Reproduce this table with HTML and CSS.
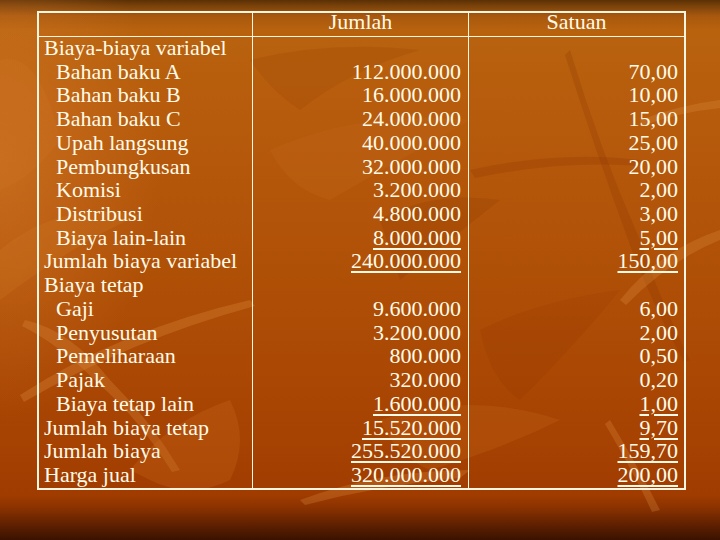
FILE: index.html
```html
<!DOCTYPE html>
<html>
<head>
<meta charset="utf-8">
<link rel="stylesheet" href="styles.css">
</head>
<body>
<div class="slide">
  <svg class="deco" width="720" height="540" viewBox="0 0 720 540" xmlns="http://www.w3.org/2000/svg">
    <path d="M0 60 Q40 50 60 140 Q30 180 0 190 Z" fill="#d07a2a" opacity="0.2"/>
    <path d="M0 250 Q60 200 140 215 Q80 240 0 300 Z" fill="#d8842e" opacity="0.18"/>
    <path d="M20 395 Q120 330 250 300 L255 306 Q130 340 24 402 Z" fill="#e09040" opacity="0.3"/>
    <path d="M25 320 Q70 330 110 380 Q150 420 180 470 L172 472 Q140 420 100 385 Q60 345 22 326 Z" fill="#e09040" opacity="0.28"/>
    <path d="M130 470 Q170 420 230 400 Q250 440 230 480 Q190 500 150 480 Z" fill="#d07020" opacity="0.25"/>
    <path d="M250 60 Q330 40 420 50 Q350 70 300 110 Q270 90 250 60 Z" fill="#8a3400" opacity="0.15"/>
    <path d="M270 150 Q360 110 470 120 Q400 160 330 200 Q290 190 270 150 Z" fill="#d27a28" opacity="0.15"/>
    <path d="M380 220 Q430 190 500 200 Q450 240 400 280 Z" fill="#7a2c00" opacity="0.14"/>
    <path d="M470 170 Q560 150 640 160 L642 166 Q560 160 475 178 Z" fill="#8a3400" opacity="0.22"/>
    <path d="M570 50 Q600 150 640 240 Q660 300 690 360 L684 362 Q650 300 630 245 Q595 150 565 55 Z" fill="#8a3000" opacity="0.22"/>
    <path d="M620 300 Q660 250 720 230 L720 240 Q670 260 626 305 Z" fill="#e09040" opacity="0.28"/>
    <path d="M640 120 Q680 105 720 100 L720 108 Q680 112 642 126 Z" fill="#e09040" opacity="0.28"/>
    <path d="M480 330 Q540 300 620 290 Q580 340 520 400 Q490 380 480 330 Z" fill="#8a3000" opacity="0.15"/>
    <path d="M300 500 Q380 470 470 470 L460 478 Q380 485 305 505 Z" fill="#e09040" opacity="0.28"/>
    <path d="M610 420 Q640 470 660 510 L652 512 Q635 475 605 424 Z" fill="#e09040" opacity="0.28"/>
    <path d="M380 420 Q470 390 560 420 Q500 450 430 470 Q395 455 380 420 Z" fill="#d27a28" opacity="0.18"/>
  </svg>
  <div class="tbl">
    <div class="hd"></div>
    <div class="hd div">Jumlah</div>
    <div class="hd div">Satuan</div>

    <div class="cell lbl">
      <div>Biaya-biaya variabel</div>
      <div class="in">Bahan baku A</div>
      <div class="in">Bahan baku B</div>
      <div class="in">Bahan baku C</div>
      <div class="in">Upah langsung</div>
      <div class="in">Pembungkusan</div>
      <div class="in">Komisi</div>
      <div class="in">Distribusi</div>
      <div class="in">Biaya lain-lain</div>
      <div>Jumlah biaya variabel</div>
      <div>Biaya tetap</div>
      <div class="in">Gaji</div>
      <div class="in">Penyusutan</div>
      <div class="in">Pemeliharaan</div>
      <div class="in">Pajak</div>
      <div class="in">Biaya tetap lain</div>
      <div>Jumlah biaya tetap</div>
      <div>Jumlah biaya</div>
      <div>Harga jual</div>
    </div>
    <div class="cell num div n1">
      <div>&nbsp;</div>
      <div>112.000.000</div>
      <div>16.000.000</div>
      <div>24.000.000</div>
      <div>40.000.000</div>
      <div>32.000.000</div>
      <div>3.200.000</div>
      <div>4.800.000</div>
      <div><u>8.000.000</u></div>
      <div><u>240.000.000</u></div>
      <div>&nbsp;</div>
      <div>9.600.000</div>
      <div>3.200.000</div>
      <div>800.000</div>
      <div>320.000</div>
      <div><u>1.600.000</u></div>
      <div><u>15.520.000</u></div>
      <div><u>255.520.000</u></div>
      <div><u>320.000.000</u></div>
    </div>
    <div class="cell num div n2">
      <div>&nbsp;</div>
      <div>70,00</div>
      <div>10,00</div>
      <div>15,00</div>
      <div>25,00</div>
      <div>20,00</div>
      <div>2,00</div>
      <div>3,00</div>
      <div><u>5,00</u></div>
      <div><u>150,00</u></div>
      <div>&nbsp;</div>
      <div>6,00</div>
      <div>2,00</div>
      <div>0,50</div>
      <div>0,20</div>
      <div><u>1,00</u></div>
      <div><u>9,70</u></div>
      <div><u>159,70</u></div>
      <div><u>200,00</u></div>
    </div>
  </div>
</div>
</body>
</html>
```
FILE: styles.css
```css
html, body {
  margin: 0;
  padding: 0;
}
body {
  width: 720px;
  height: 540px;
  overflow: hidden;
}
.slide {
  position: relative;
  width: 720px;
  height: 540px;
  padding-top: 11px;
  box-sizing: border-box;
  background:
    radial-gradient(ellipse 160px 260px at 0px 160px, rgba(214,124,44,0.55), rgba(214,124,44,0) 100%),
    linear-gradient(to bottom,
      #5a3006 0px, #7a420a 6px, #a8580e 16px, #b8620e 30px,
      #b65a0c 130px, #ae4e06 300px, #a64202 440px, #a03c00 495px,
      #8a3200 508px, #5e2000 525px, #3a1200 540px);
  font-family: "Liberation Serif", "Times New Roman", serif;
  color: #fffbe8;
}
.deco {
  position: absolute;
  left: 0;
  top: 0;
}
.tbl {
  position: relative;
  margin-left: 37px;
  width: 649px;
  border: 2px solid #fff6e2;
  box-sizing: border-box;
  display: grid;
  grid-template-columns: 213px 216px 1fr;
}
.hd {
  font-size: 22px;
  line-height: 16px;
  height: 24px;
  padding-top: 1px;
  box-sizing: border-box;
  text-align: center;
  border-bottom: 1px solid #fff6e2;
}
.div {
  border-left: 1px solid #fff6e2;
}
.cell {
  font-size: 22px;
  line-height: 23.72px;
  padding-bottom: 1px;
  white-space: nowrap;
}
.cell > div:first-child {
  margin-top: -1px;
}
.lbl {
  padding-left: 5px;
}
.lbl .in {
  padding-left: 12px;
}
.num {
  text-align: right;
}
.n1 {
  padding-right: 7px;
}
.n2 {
  padding-right: 6px;
}
u {
  text-decoration: underline;
  text-decoration-thickness: 1.5px;
  text-underline-offset: 3px;
}
```
